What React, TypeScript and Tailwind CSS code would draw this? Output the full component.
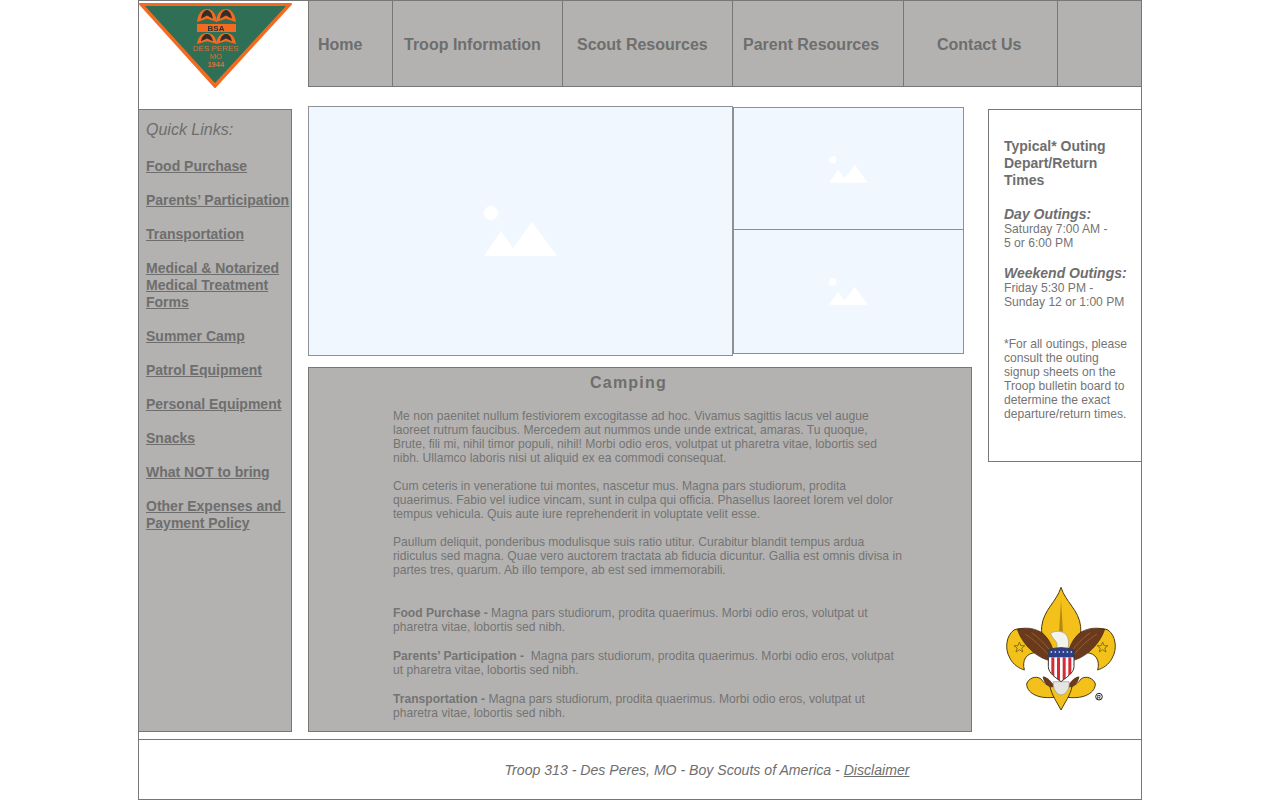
const navItems = [
  { label: 'Home', width: 'w-[84px]', cls: 'pl-[9px]' },
  { label: 'Troop Information', width: 'w-[170px]', cls: 'pl-[11px]' },
  { label: 'Scout Resources', width: 'w-[170px]', cls: 'pl-[14px]' },
  { label: 'Parent Resources', width: 'w-[171px]', cls: 'pl-[10px]' },
  { label: 'Contact Us', width: 'w-[154px]', cls: 'pl-[33px]' },
];

const quickLinks = [
  ['Food Purchase'],
  ['Parents’ Participation'],
  ['Transportation'],
  ['Medical & Notarized', 'Medical Treatment', 'Forms'],
  ['Summer Camp'],
  ['Patrol Equipment'],
  ['Personal Equipment'],
  ['Snacks'],
  ['What NOT to bring'],
  ['Other Expenses and\u00a0', 'Payment Policy'],
];

function Placeholder({ big }: { big?: boolean }) {
  return (
    <svg viewBox="0 0 73 50" className={big ? 'w-[73px] h-[50px]' : 'w-[39px] h-[27px]'}>
      <circle cx="7" cy="7" r="7" fill="#fff" />
      <path d="M0 50 L17 25 L29 42 L48 16 L73 50 Z" fill="#fff" />
    </svg>
  );
}

function Arch({ x, y, h }: { x: number; y: number; h: number }) {
  return (
    <g transform={`translate(${x} ${y}) scale(1 ${h / 12})`}>
      <path d="M0 12 C1 4 5 0 10 0 C15 0 19 4 20 12 L10 9 Z" fill="#f26b21" />
      <path d="M4 9 C5 3 8 1 10 1 C12 1 15 3 16 9 L10 6 Z" fill="#33302c" />
    </g>
  );
}

function TroopPatch() {
  return (
    <svg viewBox="0 0 153 88" className="h-[88px] w-[153px] blur-[0.4px]">
      <path d="M1 3 H152 L76 86 Z" fill="#f26b21" stroke="#f26b21" strokeWidth="2" strokeLinejoin="round" />
      <path d="M6 5 H147 L76 82 Z" fill="#2f6f55" />
      <Arch x={58} y={8} h={13} />
      <Arch x={77} y={8} h={13} />
      <rect x="58" y="23" width="39" height="8" fill="#f26b21" />
      <text x="77" y="30" textAnchor="middle" fontSize="8" fontWeight="700" fill="#33302c" fontFamily="'Liberation Sans', sans-serif">BSA</text>
      <Arch x={58} y={32} h={11} />
      <Arch x={77} y={32} h={11} />
      <text x="77" y="50" textAnchor="middle" fontSize="8" fill="#e8703a" fontFamily="'Liberation Sans', sans-serif">DES PERES</text>
      <text x="77" y="58" textAnchor="middle" fontSize="7.5" fill="#e8703a" fontFamily="'Liberation Sans', sans-serif">MO</text>
      <text x="77" y="66" textAnchor="middle" fontSize="7.5" fontWeight="700" fill="#e8703a" fontFamily="'Liberation Sans', sans-serif">1944</text>
    </svg>
  );
}

function FleurLobes() {
  return (
    <g>
      <path
        d="M150 205 C130 180 95 170 72 180 C50 195 42 235 60 265 C70 285 88 295 103 300 C95 270 110 250 135 248 C150 248 160 258 172 268 Z"
        fill="#f3c11a"
        stroke="#4a3a10"
        strokeWidth="3"
      />
      <path
        d="M190 345 C172 352 162 338 152 326 C136 316 115 325 110 342 C110 366 140 388 192 382 Z"
        fill="#f3c11a"
        stroke="#4a3a10"
        strokeWidth="3"
      />
      <path d="M88 216 l4.5 11 12 0 -9.5 7 3.5 12 -10.5 -7 -10 7 3.5 -12 -9.5 -7 12 0 Z" fill="none" stroke="#7b6410" strokeWidth="2.5" />
    </g>
  );
}

function FleurWing() {
  return (
    <g>
      <path d="M82 178 C110 170 140 176 158 190 C172 202 182 218 188 236 L182 272 C150 268 100 232 82 178 Z" fill="#6b3a1c" stroke="#3c200e" strokeWidth="2" />
      <path d="M105 192 C130 208 155 230 178 258 M125 188 C148 204 165 222 182 244" fill="none" stroke="#8f5f38" strokeWidth="3" />
      <path d="M158 320 C168 318 180 330 192 345 L180 352 C170 345 160 335 158 320 Z" fill="#6b3a1c" />
    </g>
  );
}

const shieldDots = [184, 196, 208, 220, 232, 244];

function FleurDeLis() {
  return (
    <svg viewBox="0 0 450 450" className="h-[150px] w-[150px] blur-[0.4px]">
      <defs>
        <clipPath id="shield">
          <path d="M175 240 Q213 226 252 240 V290 C252 310 225 325 213 335 C200 325 175 310 175 290 Z" />
        </clipPath>
      </defs>
      <FleurLobes />
      <g transform="translate(426 0) scale(-1 1)">
        <FleurLobes />
      </g>
      <path d="M213 52 C200 95 160 120 155 170 C153 200 162 225 175 262 H252 C265 225 274 200 272 170 C267 120 226 95 213 52 Z" fill="#f3c11a" stroke="#4a3a10" strokeWidth="3" />
      <path d="M213 90 L207 185 H219 Z" fill="#b8890f" />
      <path d="M180 350 C185 375 200 395 213 420 C226 395 241 375 246 350 Z" fill="#f3c11a" stroke="#4a3a10" strokeWidth="3" />
      <FleurWing />
      <g transform="translate(426 0) scale(-1 1)">
        <FleurWing />
      </g>
      <path d="M182 190 C195 180 225 182 232 200 C238 215 236 228 232 238 H198 C205 225 200 215 190 205 C187 200 182 195 182 190 Z" fill="#f2f2ee" stroke="#999" strokeWidth="2" />
      <path d="M190 335 H237 C240 352 232 372 213 375 C196 372 188 352 190 335 Z" fill="#e4e4e2" stroke="#999" strokeWidth="2" />
      <g clipPath="url(#shield)">
        <rect x="172" y="225" width="84" height="112" fill="#fff" />
        <rect x="172" y="225" width="84" height="37" fill="#2b3f8c" />
        {shieldDots.map((x) => (
          <circle key={x} cx={x} cy="246" r="2.5" fill="#fff" />
        ))}
        <rect x="184" y="262" width="9" height="75" fill="#d62b33" />
        <rect x="201" y="262" width="9" height="75" fill="#d62b33" />
        <rect x="218" y="262" width="9" height="75" fill="#d62b33" />
        <rect x="235" y="262" width="9" height="75" fill="#d62b33" />
      </g>
      <path d="M175 240 Q213 226 252 240 V290 C252 310 225 325 213 335 C200 325 175 310 175 290 Z" fill="none" stroke="#333" strokeWidth="3" />
      <circle cx="327" cy="380" r="10" fill="#fff" stroke="#222" strokeWidth="3" />
      <text x="327" y="386" textAnchor="middle" fontSize="16" fontWeight="700" fill="#222" fontFamily="'Liberation Sans', sans-serif">R</text>
    </svg>
  );
}

function Para({ lines, className }: { lines: React.ReactNode[]; className?: string }) {
  return (
    <div className={className}>
      {lines.map((l, i) => (
        <div key={i} className="whitespace-pre">{l}</div>
      ))}
    </div>
  );
}

export default function App() {
  return (
    <div className="mx-auto flex h-[800px] w-[1004px] flex-col overflow-hidden border-x border-b border-[#777] bg-white font-['Liberation_Sans',Arial,sans-serif] text-[#6e6e6e]">
      <div className="flex h-[87px] shrink-0 border-t border-[#777]">
        <div className="w-[169px] shrink-0"><TroopPatch /></div>
        <nav className="flex flex-1 border-b border-l border-[#777] bg-[#b3b2b0]">
          {navItems.map((item) => (
            <div
              key={item.label}
              className={`${item.width} ${item.cls} flex items-center border-r border-[#777] pt-[2px] text-[16px] font-bold`}
            >
              {item.label}
            </div>
          ))}
        </nav>
      </div>

      <div className="flex flex-1">
        <aside className="mt-[22px] h-[623px] w-[153px] shrink-0 border border-l-0 border-[#777] bg-[#b3b2b0] pl-[7px] pt-[10px]">
          <p className="mb-[18px] text-[16px] leading-[20px] italic">Quick Links:</p>
          <div className="flex flex-col gap-[17px] text-[14px] leading-[17px] font-bold whitespace-nowrap underline">
            {quickLinks.map((lines) => (
              <div key={lines[0]}>
                {lines.map((l) => (
                  <div key={l}>{l}</div>
                ))}
              </div>
            ))}
          </div>
        </aside>

        <main className="ml-[16px] mt-[19px] w-[664px] shrink-0">
          <div className="flex h-[250px]">
            <div className="flex h-[250px] w-[425px] shrink-0 items-center justify-center border border-[#8d9195] bg-[#f0f7ff]">
              <Placeholder big />
            </div>
            <div className="mt-[1px] flex h-[247px] w-[231px] shrink-0 flex-col border border-[#8d9195] bg-[#f0f7ff]">
              <div className="flex h-[122px] items-center justify-center border-b border-[#8d9195] pt-[2px]">
                <Placeholder />
              </div>
              <div className="flex flex-1 items-center justify-center">
                <Placeholder />
              </div>
            </div>
          </div>

          <section className="mt-[11px] h-[365px] border border-[#777] bg-[#b3b2b0] text-[12.1px] leading-[14px] text-[#747474]">
            <h2 className="pr-[23px] pt-[5px] text-center text-[16px] leading-[20px] font-bold tracking-[1.2px] text-[#6e6e6e]">Camping</h2>
            <div className="ml-[84px] mt-[16px]">
              <Para lines={[
                'Me non paenitet nullum festiviorem excogitasse ad hoc. Vivamus sagittis lacus vel augue',
                'laoreet rutrum faucibus. Mercedem aut nummos unde unde extricat, amaras. Tu quoque,',
                'Brute, fili mi, nihil timor populi, nihil! Morbi odio eros, volutpat ut pharetra vitae, lobortis sed',
                'nibh. Ullamco laboris nisi ut aliquid ex ea commodi consequat.',
              ]} />
              <Para className="mt-[14px]" lines={[
                'Cum ceteris in veneratione tui montes, nascetur mus. Magna pars studiorum, prodita',
                'quaerimus. Fabio vel iudice vincam, sunt in culpa qui officia. Phasellus laoreet lorem vel dolor',
                'tempus vehicula. Quis aute iure reprehenderit in voluptate velit esse.',
              ]} />
              <Para className="mt-[14px]" lines={[
                'Paullum deliquit, ponderibus modulisque suis ratio utitur. Curabitur blandit tempus ardua',
                'ridiculus sed magna. Quae vero auctorem tractata ab fiducia dicuntur. Gallia est omnis divisa in',
                'partes tres, quarum. Ab illo tempore, ab est sed immemorabili.',
              ]} />
              <Para className="mt-[29px]" lines={[
                <><b>Food Purchase - </b>Magna pars studiorum, prodita quaerimus. Morbi odio eros, volutpat ut</>,
                'pharetra vitae, lobortis sed nibh.',
              ]} />
              <Para className="mt-[15px]" lines={[
                <><b>Parents’ Participation - </b> Magna pars studiorum, prodita quaerimus. Morbi odio eros, volutpat</>,
                'ut pharetra vitae, lobortis sed nibh.',
              ]} />
              <Para className="mt-[15px]" lines={[
                <><b>Transportation - </b>Magna pars studiorum, prodita quaerimus. Morbi odio eros, volutpat ut</>,
                'pharetra vitae, lobortis sed nibh.',
              ]} />
            </div>
          </section>
        </main>

        <aside className="ml-[16px] mt-[22px] flex flex-1 flex-col">
          <div className="h-[353px] border-y border-l border-[#777] pl-[15px] pt-[28px]">
            <p className="text-[14px] leading-[17px] font-bold">Typical* Outing<br />Depart/Return<br />Times</p>
            <p className="mt-[17px] text-[14px] leading-[16px] font-bold italic">Day Outings:</p>
            <p className="text-[12.1px] leading-[14px] text-[#747474]">Saturday 7:00 AM -<br />5 or 6:00 PM</p>
            <p className="mt-[15px] text-[14px] leading-[16px] font-bold italic">Weekend Outings:</p>
            <p className="text-[12.1px] leading-[14px] text-[#747474]">Friday 5:30 PM -<br />Sunday 12 or 1:00 PM</p>
            <p className="mt-[28px] text-[12.1px] leading-[14px] whitespace-nowrap text-[#747474]">
              *For all outings, please<br />consult the outing<br />signup sheets on the<br />Troop bulletin board to<br />determine the exact<br />departure/return times.
            </p>
          </div>
          <div className="ml-[2px] mt-[108px]"><FleurDeLis /></div>
        </aside>
      </div>

      <footer className="flex h-[60px] shrink-0 items-center justify-center border-t border-[#777] pl-[134px] pt-[3px] text-[14.1px] italic">
        <span>Troop 313 - Des Peres, MO - Boy Scouts of America - <span className="underline">Disclaimer</span></span>
      </footer>
    </div>
  );
}
